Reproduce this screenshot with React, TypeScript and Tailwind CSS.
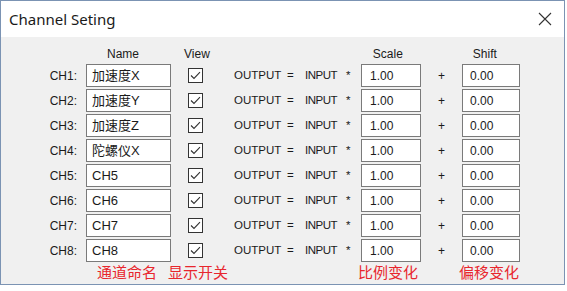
const channels = [
  { id: 'CH1', name: '加速度X' },
  { id: 'CH2', name: '加速度Y' },
  { id: 'CH3', name: '加速度Z' },
  { id: 'CH4', name: '陀螺仪X' },
  { id: 'CH5', name: 'CH5' },
  { id: 'CH6', name: 'CH6' },
  { id: 'CH7', name: 'CH7' },
  { id: 'CH8', name: 'CH8' },
];

const CheckBox = () => (
  <div className="w-[15px] h-[15px] border border-[#333333] bg-white flex items-center justify-center">
    <svg width="11" height="9" viewBox="0 0 11 9" fill="none">
      <path d="M1 4.5 L4 7.5 L10 1.2" stroke="#333333" strokeWidth="1.1" />
    </svg>
  </div>
);

export default function App() {
  return (
    <div className="w-[567px] h-[291px] bg-white text-[#1a1a1a]" style={{ fontFamily: '"Liberation Sans", "Noto Sans CJK SC", sans-serif' }}>
      <div className="w-[565px] h-[285px] border border-[#7b93b3] flex flex-col">
        {/* title bar */}
        <div className="h-[36px] bg-white flex items-center justify-between pl-[8px] pr-[12px] shrink-0">
          <span className="text-[15px] text-[#1a1a1a]" style={{ fontFamily: '"Noto Sans", sans-serif' }}>Channel Seting</span>
          <svg width="14" height="14" viewBox="0 0 14 14" className="mr-[0px]">
            <path d="M1 1 L13 13 M13 1 L1 13" stroke="#333333" strokeWidth="1.1" />
          </svg>
        </div>

        <div className="flex-1 bg-[#f0f0f0] pt-[8px]">
          {/* headers */}
          <div className="h-[18px] flex items-center text-[12px]">
            <span className="ml-[106px]">Name</span>
            <span className="ml-[45px]">View</span>
            <span className="ml-[163px]">Scale</span>
            <span className="ml-[70px]">Shift</span>
          </div>

          <div className="mt-[1px] flex flex-col gap-[2px]">
            {channels.map((ch) => (
              <div key={ch.id} className="h-[23px] flex items-center text-[12px]">
                <span className="w-[76px] text-right">{ch.id}:</span>
                <div className="ml-[9px] w-[85px] h-[23px] border border-[#7a7a7a] bg-white flex items-center pl-[5px] text-[13px]">
                  {ch.name}
                </div>
                <div className="ml-[17px]">
                  <CheckBox />
                </div>
                <span className="ml-[31px] w-[53px] text-[11.5px]">OUTPUT</span>
                <span className="w-[18px] text-[11.5px]">=</span>
                <span className="w-[41px] text-[11.5px] tracking-[-0.5px]">INPUT</span>
                <span className="w-[15px] text-[11.5px]">*</span>
                <div className="w-[60px] h-[23px] border border-[#7a7a7a] bg-white flex items-center pl-[8px]">1.00</div>
                <span className="w-[41px] text-center">+</span>
                <div className="w-[58px] h-[23px] border border-[#7a7a7a] bg-white flex items-center pl-[7px]">0.00</div>
              </div>
            ))}
          </div>

          <div className="h-[20px] flex items-center text-[15px] text-[#e8262d]" style={{ fontFamily: '"Noto Sans CJK SC", sans-serif' }}>
            <span className="ml-[96px]">通道命名</span>
            <span className="ml-[11px]">显示开关</span>
            <span className="ml-[130px]">比例变化</span>
            <span className="ml-[41px]">偏移变化</span>
          </div>
        </div>
      </div>
    </div>
  );
}
